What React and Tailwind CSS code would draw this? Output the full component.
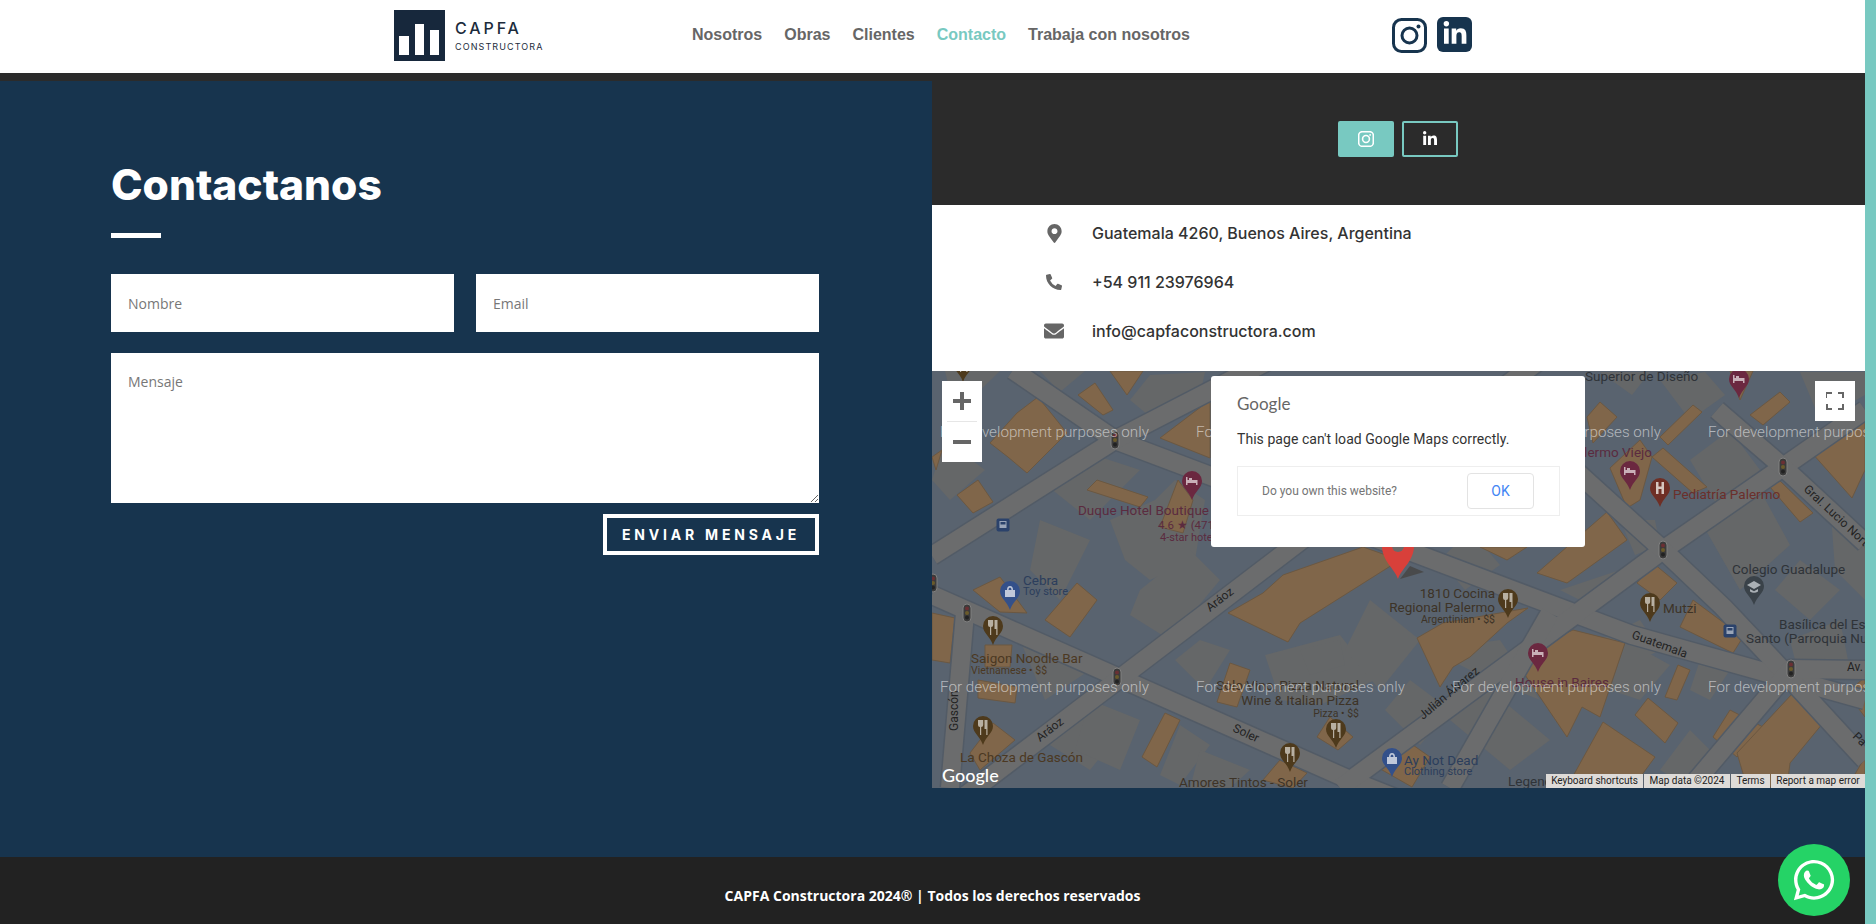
import React from 'react';
import { FaLinkedinIn, FaWhatsapp, FaMapMarkerAlt, FaPhoneAlt, FaEnvelope } from 'react-icons/fa';

const navItems = ['Nosotros', 'Obras', 'Clientes', 'Contacto', 'Trabaja con nosotros'];

const roads = [
  [[932, 595], [1350, 780], [1400, 800]],
  [[932, 821], [1052, 730], [1223, 600], [1400, 465], [1560, 345]],
  [[1013, 370], [1115, 440], [1632, 635], [1865, 700]],
  [[932, 556], [1115, 440], [1270, 360]],
  [[965, 613], [950, 788]],
  [[1340, 788], [1663, 550], [1783, 467], [1865, 410]],
  [[1500, 400], [1567, 463], [1663, 550], [1723, 607], [1773, 660], [1865, 760]],
  [[1717, 410], [1783, 467], [1865, 543]],
  [[1550, 613], [1450, 788]],
  [[1690, 788], [1791, 669], [1865, 670]],
];

const oranges = [
  '1110,371 1143,371 1127,395', '1078,395 1095,383 1113,410 1103,415',
  '1017,413 1038,397 1067,433 1027,473 1008,457 990,443', '957,495 978,480 993,502 973,513',
  '1087,490 1097,480 1148,497 1140,507', '1160,527 1178,480 1193,500 1183,533',
  '1160,438 1210,400 1210,458', '932,457 942,450 936,470',
  '1587,417 1600,402 1617,417 1593,443', '1660,437 1693,405 1702,412 1668,445',
  '1750,415 1780,392 1790,402 1763,425', '1812,453 1865,410 1865,470 1852,498',
  '1610,468 1640,440 1652,457 1640,500 1627,508', '1652,457 1663,448 1707,487 1693,493',
  '1770,487 1777,478 1813,513 1800,522', '1537,573 1607,512 1627,540 1567,583',
  '1480,547 1527,547 1507,560', '1637,583 1653,563 1677,583 1660,600',
  '1730,371 1753,371 1740,400', '973,590 1000,577 1027,613 1000,612',
  '1045,620 1077,583 1097,600 1070,637', '932,613 955,618 950,663 932,660',
  '985,645 1012,645 1010,667 985,667', '978,680 1017,687 1015,703 978,698',
  '970,753 993,723 1015,740 980,770', '1142,757 1165,713 1180,720 1157,767',
  '1228,613 1263,593 1283,575 1363,547 1400,560 1300,623 1288,642',
  '1217,702 1230,663 1250,670 1237,707', '1263,780 1280,760 1307,773 1293,788',
  '1317,737 1330,717 1353,737 1338,750', '1377,767 1410,743 1430,757 1412,787',
  '1417,638 1443,623 1528,608 1507,623 1470,657 1453,667 1440,687',
  '1557,637 1573,630 1625,643 1600,717 1582,707 1567,737 1517,663',
  '1567,787 1603,722 1655,757 1633,787', '1665,697 1678,665 1690,670 1677,700',
  '1635,715 1648,698 1678,723 1665,743', '1680,627 1693,600 1743,637 1733,653',
  '1713,737 1730,710 1763,727 1737,757', '1737,753 1793,693 1823,723 1790,763 1787,787 1747,787',
  '1847,693 1865,677 1865,717', '1847,788 1865,757 1865,788',
];

const grays = [
  '945,371 1000,371 970,400 950,392', '1040,371 1085,371 1060,392',
  '1130,400 1150,375 1205,372 1200,395 1160,425', '945,440 985,470 950,500 932,480',
  '1040,480 1085,452 1140,470 1090,520', '1110,520 1155,500 1175,480 1205,500 1195,560 1150,580 1125,560',
  '1040,520 1090,540 1060,600 1030,570', '1140,590 1190,550 1220,580 1170,640 1130,615',
  '1020,640 1060,650 1090,670 1045,700', '1050,745 1085,700 1130,720 1090,770',
  '1175,660 1200,640 1230,650 1205,690', '1180,725 1210,745 1180,785 1160,775',
  '1200,750 1250,770 1230,788 1190,788', '1265,655 1340,635 1375,680 1320,705 1280,700',
  '1370,600 1420,640 1380,690 1345,650', '1410,680 1450,710 1420,745 1385,710',
  '1450,720 1490,690 1550,740 1510,770', '1430,650 1500,640 1540,700 1490,680',
  '1600,372 1650,372 1632,395', '1660,380 1705,372 1725,395 1690,420', '1620,520 1655,520 1660,545 1635,555',
  '1690,460 1730,430 1760,470 1720,510', '1700,520 1760,490 1790,545 1740,590',
  '1800,560 1840,590 1810,620 1775,590', '1625,640 1670,665 1640,700 1610,690',
  '1500,500 1530,470 1570,510 1545,535', '1440,560 1470,530 1500,565 1465,590',
  '1800,372 1865,372 1865,395 1820,420', '1700,660 1730,670 1710,700 1690,690',
  '1560,590 1620,570 1600,610', '1790,640 1840,620 1850,670 1800,680',
  '1090,700 1140,720 1120,770 1075,750', '1300,650 1340,640 1345,665 1310,675',
  '1830,500 1865,530 1865,600 1835,570', '1600,640 1640,620 1660,650 1620,670',
  '1690,730 1720,760 1690,788 1660,770',
];

const labels = [
  { t: 'Superior de Diseño', x: 1585, y: 381, c: '#2f3338', s: 13.5 },
  { t: 'Palermo Viejo', x: 1652, y: 457, c: '#5b2b3f', s: 13.5, a: 'end' },
  { t: 'Pediatría Palermo', x: 1673, y: 499, c: '#6b2f2b', s: 13.5 },
  { t: 'Colegio Guadalupe', x: 1732, y: 574, c: '#2f3338', s: 13.5 },
  { t: 'Duque Hotel Boutique', x: 1078, y: 515, c: '#5b2b3f', s: 13.5 },
  { t: '4.6 ★ (471)', x: 1158, y: 529, c: '#5b2b3f', s: 11.5 },
  { t: '4-star hotel', x: 1160, y: 541, c: '#5b2b3f', s: 11 },
  { t: 'Cebra', x: 1023, y: 585, c: '#2c3e5c', s: 13.5 },
  { t: 'Toy store', x: 1023, y: 595, c: '#2c3e5c', s: 11 },
  { t: 'Saigon Noodle Bar', x: 971, y: 663, c: '#4b3822', s: 13.5 },
  { t: 'Vietnamese • $$', x: 971, y: 674, c: '#4b3822', s: 10.5 },
  { t: 'Solo Vino, Pizza Natural', x: 1359, y: 690, c: '#3d3327', s: 13.5, a: 'end' },
  { t: 'Wine & Italian Pizza', x: 1359, y: 705, c: '#3d3327', s: 13.5, a: 'end' },
  { t: 'Pizza • $$', x: 1359, y: 717, c: '#3d3327', s: 10.5, a: 'end' },
  { t: 'La Choza de Gascón', x: 960, y: 762, c: '#4b3822', s: 13.5 },
  { t: 'Amores Tintos - Soler', x: 1179, y: 787, c: '#3d3327', s: 13.5 },
  { t: 'Ay Not Dead', x: 1404, y: 765, c: '#2c3e5c', s: 13.5 },
  { t: 'Clothing store', x: 1404, y: 775, c: '#2c3e5c', s: 11 },
  { t: '1810 Cocina', x: 1495, y: 598, c: '#3d3327', s: 13.5, a: 'end' },
  { t: 'Regional Palermo', x: 1495, y: 612, c: '#3d3327', s: 13.5, a: 'end' },
  { t: 'Argentinian • $$', x: 1495, y: 623, c: '#3d3327', s: 10.5, a: 'end' },
  { t: 'Mutzi', x: 1663, y: 613, c: '#3d3327', s: 13.5 },
  { t: 'Basílica del Espíritu', x: 1779, y: 629, c: '#2f3338', s: 13.5 },
  { t: 'Santo (Parroquia Nuestra', x: 1746, y: 643, c: '#2f3338', s: 13.5 },
  { t: 'House in Baires', x: 1515, y: 687, c: '#5b2b3f', s: 13.5 },
  { t: 'Av.', x: 1847, y: 671, c: '#222', s: 12 },
  { t: 'Legend', x: 1508, y: 786, c: '#2f3338', s: 13.5 },
];

const streets = [
  { t: 'Aráoz', x: 1040, y: 742, r: -38 },
  { t: 'Aráoz', x: 1210, y: 612, r: -38 },
  { t: 'Gascón', x: 958, y: 731, r: -90 },
  { t: 'Soler', x: 1232, y: 731, r: 25 },
  { t: 'Guatemala', x: 1631, y: 638, r: 20 },
  { t: 'Julián Álvarez', x: 1423, y: 720, r: -40 },
  { t: 'Gral. Lucio Norte', x: 1803, y: 490, r: 43 },
  { t: 'Pa', x: 1852, y: 737, r: 45 },
];

const pins = [
  { x: 963, y: 382, c: '#4e3a1c', g: 'fork' }, { x: 993, y: 645, c: '#4e3a1c', g: 'fork' },
  { x: 983, y: 745, c: '#4e3a1c', g: 'fork' }, { x: 1290, y: 772, c: '#4e3a1c', g: 'fork' },
  { x: 1336, y: 748, c: '#4e3a1c', g: 'fork' }, { x: 1508, y: 618, c: '#4e3a1c', g: 'fork' },
  { x: 1650, y: 622, c: '#4e3a1c', g: 'fork' },
  { x: 1192, y: 500, c: '#6b2840', g: 'bed' }, { x: 1630, y: 490, c: '#6b2840', g: 'bed' },
  { x: 1739, y: 398, c: '#6b2840', g: 'bed' }, { x: 1538, y: 672, c: '#6b2840', g: 'bed' },
  { x: 1660, y: 507, c: '#6f2f25', g: 'h' },
  { x: 1754, y: 605, c: '#3a4249', g: 'school' },
  { x: 1010, y: 610, c: '#33508a', g: 'bag' }, { x: 1392, y: 777, c: '#33508a', g: 'bag' },
];

const lights = [[1115, 440], [967, 613], [1117, 677], [1783, 467], [1663, 550], [1791, 669], [933, 583]];
const buses = [[1003, 525], [1730, 631]];
const devMarks = [[940, 437], [1196, 437], [1452, 437], [1708, 437], [940, 692], [1196, 692], [1452, 692], [1708, 692]];

const PinGlyph = ({ g }) => {
  if (g === 'fork') return <path d="M-5 -25v5q0 2 2 2v8h1.2v-8q2 0 2-2v-5M1.5 -25h3v15h-1.2v-6h-1.8z" fill="#b8b0a2" />;
  if (g === 'bed') return <path d="M-6 -23h1.5v3h10v5h-1.5v-2h-8.5v2h-1.5zM-3 -22h3v2h-3z" fill="#c9b0b8" />;
  if (g === 'h') return <path d="M-4 -25h2.5v4.5h3v-4.5h2.5v12h-2.5v-5h-3v5h-2.5z" fill="#d6c6bf" />;
  if (g === 'school') return <path d="M0 -24l7 4-7 4-7-4zM-4 -16v2.5q4 2.5 8 0v-2.5l-4 2.2z" fill="#aab0b5" />;
  return <path d="M-5 -20h10v7h-10zM-3 -20q0-4 3-4t3 4h-1.5q0-2.5-1.5-2.5t-1.5 2.5z" fill="#c0c8da" />;
};

const MapDrawing = () => (
  <svg viewBox="932 371 933 417" className="block w-full h-full" fontFamily="Roboto, sans-serif">
    <rect x="932" y="371" width="933" height="417" fill="#59636f" />
    {grays.map((p) => <polygon key={p} points={p} fill="#656768" />)}
    {oranges.map((p) => <polygon key={p} points={p} fill="#80664a" stroke="#6b5842" strokeWidth="1" />)}
    {roads.map((r, i) => (
      <polyline key={i} points={r.map((p) => p.join(',')).join(' ')} fill="none" stroke="#525b66" strokeWidth="21" strokeLinejoin="round" />
    ))}
    {roads.map((r, i) => (
      <polyline key={i} points={r.map((p) => p.join(',')).join(' ')} fill="none" stroke="#6b6c6d" strokeWidth="18" strokeLinejoin="round" />
    ))}
    {lights.map(([x, y]) => (
      <g key={`${x}-${y}`}>
        <rect x={x - 4} y={y - 9} width="8" height="18" rx="4" fill="#3b3b3b" stroke="#808080" />
        <circle cx={x} cy={y - 4.5} r="2" fill="#6a2f33" />
        <circle cx={x} cy={y} r="2" fill="#6a5a2a" />
        <circle cx={x} cy={y + 4.5} r="2" fill="#222" />
      </g>
    ))}
    {buses.map(([x, y]) => (
      <g key={x}>
        <rect x={x - 6.5} y={y - 6.5} width="13" height="13" rx="2" fill="#2b426b" />
        <path d={`M${x - 3.5} ${y - 4}h7v7h-7zM${x - 2.5} ${y - 3}v2.5h5v-2.5z`} fill="#9aa5b8" fillRule="evenodd" />
      </g>
    ))}
    {labels.map((l) => (
      <text key={l.t} x={l.x} y={l.y} fill={l.c} fontSize={l.s} textAnchor={l.a || 'start'}>{l.t}</text>
    ))}
    {streets.map((s) => (
      <text key={`${s.t}-${s.x}`} transform={`translate(${s.x} ${s.y}) rotate(${s.r})`} fill="#232323" fontSize="12">{s.t}</text>
    ))}
    {pins.map((p) => (
      <g key={`${p.x}-${p.y}`} transform={`translate(${p.x} ${p.y})`}>
        <path d="M0 0C-3 -9 -10 -12 -10 -19a10 10 0 1 1 20 0C10 -12 3 -9 0 0Z" fill={p.c} />
        <PinGlyph g={p.g} />
      </g>
    ))}
    {/* red marker, most of it sits behind the dialog */}
    <path d="M1400 579l24-7-14-6z" fill="#3f3a33" fillOpacity="0.6" />
    <g transform="translate(1398 579)">
      <path d="M0 0C-3 -10 -16 -18 -16 -33a16 16 0 1 1 32 0C16 -18 3 -10 0 0Z" fill="#d8403a" />
      <circle cx="0" cy="-33" r="6" fill="#6a6a6a" />
    </g>
    {devMarks.map(([x, y]) => (
      <text key={`${x}-${y}`} x={x} y={y} fill="#ffffff" fillOpacity="0.55" fontSize="15.2" fontWeight="300">For development purposes only</text>
    ))}
  </svg>
);

const InstagramIcon = ({ size = 35, color = '#17344e', stroke = 3 }) => (
  <svg width={size} height={size} viewBox="0 0 35 35" fill="none" stroke={color} strokeWidth={stroke}>
    <rect x="1.5" y="1.5" width="32" height="32" rx="8" />
    <circle cx="17.5" cy="17.5" r="7.5" />
    <circle cx="26.5" cy="8.5" r="2" fill={color} stroke="none" />
  </svg>
);

const Logo = () => (
  <div className="flex items-center gap-[10px]">
    <svg width="51" height="51" viewBox="0 0 51 51">
      <rect width="51" height="51" fill="#17283c" />
      <rect x="5" y="26" width="10" height="19" fill="#fff" />
      <rect x="21" y="14" width="9" height="31" fill="#fff" />
      <rect x="36" y="20" width="9" height="25" fill="#fff" />
    </svg>
    <div className="text-[#1c2b3c] font-['Inter',sans-serif]">
      <div className="text-[16px] leading-[20px] font-medium tracking-[2.9px]">CAPFA</div>
      <div className="text-[9px] leading-[10px] mt-[4px] tracking-[1.1px]">CONSTRUCTORA</div>
    </div>
  </div>
);

const Header = () => (
  <header className="h-[73px] bg-white flex items-center pl-[394px] pb-[3px]">
    <div className="w-[298px]"><Logo /></div>
    <nav className="flex gap-[22px] w-[700px] font-['Liberation_Sans',sans-serif] font-bold text-[16px]">
      {navItems.map((item) => (
        <a key={item} className={item === 'Contacto' ? 'text-[#78c9c1]' : 'text-[#666]'}>{item}</a>
      ))}
    </nav>
    <div className="flex items-center gap-[10px]">
      <InstagramIcon />
      <div className="w-[35px] h-[35px] rounded-[6px] bg-[#17344e] flex items-center justify-center text-white -mt-[2px]">
        <FaLinkedinIn size={26} />
      </div>
    </div>
  </header>
);

const ContactForm = () => (
  <section className="w-[932px] mt-[8px] bg-[#17344e] pl-[111px] pr-[113px] pt-[76px]">
    <h1 className="text-white font-['Inter',sans-serif] font-extrabold text-[42.5px] leading-[56px]">Contactanos</h1>
    <div className="w-[50px] h-[5px] bg-white mt-[20px]" />
    <div className="flex gap-[22px] mt-[36px]">
      <input placeholder="Nombre" className="flex-1 min-w-0 h-[58px] bg-white px-[17px] text-[14px] font-['Open_Sans',sans-serif] placeholder:text-[#777] outline-none" />
      <input placeholder="Email" className="flex-1 min-w-0 h-[58px] bg-white px-[17px] text-[14px] font-['Open_Sans',sans-serif] placeholder:text-[#777] outline-none" />
    </div>
    <textarea placeholder="Mensaje" className="block w-full h-[150px] mt-[21px] bg-white px-[17px] py-[19px] text-[14px] leading-[20px] font-['Open_Sans',sans-serif] placeholder:text-[#777] outline-none" />
    <div className="flex justify-end mt-[11px]">
      <button className="w-[216px] h-[41px] border-[4px] border-white text-white font-['Inter',sans-serif] font-bold text-[14px] tracking-[3.8px]">ENVIAR MENSAJE</button>
    </div>
  </section>
);

const contactRows = [
  { icon: <FaMapMarkerAlt size={19} />, text: 'Guatemala 4260, Buenos Aires, Argentina' },
  { icon: <FaPhoneAlt size={16} />, text: '+54 911 23976964' },
  { icon: <FaEnvelope size={20} />, text: 'info@capfaconstructora.com' },
];

const MapPanel = () => (
  <div className="relative h-[417px] overflow-hidden">
    <MapDrawing />
    <div className="absolute left-[10px] top-[10px] w-[40px] h-[81px] bg-white flex flex-col items-center text-[#666]">
      <svg width="40" height="40" viewBox="0 0 40 40"><path d="M18 11h4v7h7v4h-7v7h-4v-7h-7v-4h7z" fill="currentColor" /></svg>
      <div className="w-[30px] h-px bg-[#e6e6e6]" />
      <svg width="40" height="40" viewBox="0 0 40 40"><path d="M11 18h18v4h-18z" fill="currentColor" /></svg>
    </div>
    <div className="absolute right-[10px] top-[10px] w-[40px] h-[40px] bg-white flex items-center justify-center">
      <svg width="18" height="18" viewBox="0 0 18 18" fill="none" stroke="#666" strokeWidth="2"><path d="M0 6V1h6M12 1h5v5M17 12v5h-5M6 17H1v-5" /></svg>
    </div>
    <div className="absolute left-[279px] top-[5px] w-[374px] h-[171px] bg-white rounded-[3px] px-[26px] pt-[16px] font-['Roboto',sans-serif]">
      <div className="font-['Lato',sans-serif] text-[17px] leading-[24px] text-[#666]">Google</div>
      <p className="mt-[11px] text-[14px] leading-[24px] tracking-[0.05px] text-[#333]">This page can't load Google Maps correctly.</p>
      <div className="mt-[15px] w-[323px] h-[50px] border border-[#eee] flex items-center justify-between pl-[24px] pr-[25px]">
        <span className="text-[12px] text-[#757575]">Do you own this website?</span>
        <button className="w-[67px] h-[36px] border border-[#e3e3e3] rounded-[4px] text-[14px] text-[#4285f4]">OK</button>
      </div>
    </div>
    <div className="absolute left-[10px] bottom-[1px] text-white font-['Lato',sans-serif] text-[18px] leading-[24px] font-medium">Google</div>
    <div className="absolute right-0 bottom-0 h-[14px] flex gap-px text-[10px] leading-[14px] text-[#222] font-['Roboto',sans-serif]">
      <span className="w-[97px] text-center bg-[#dedbd8]">Keyboard shortcuts</span>
      <span className="w-[86px] text-center bg-[#dedbd8]">Map data ©2024</span>
      <span className="w-[39px] text-center bg-[#dedbd8]">Terms</span>
      <span className="w-[94px] text-center bg-[#dedbd8]">Report a map error</span>
    </div>
  </div>
);

const InfoColumn = () => (
  <section className="flex-1 flex flex-col">
    <div className="h-[132px] flex justify-center gap-[8px] pt-[48px] pr-[2px]">
      <div className="w-[56px] h-[36px] rounded-[2px] bg-[#78c9c1] flex items-center justify-center">
        <InstagramIcon size={16} color="#fff" stroke={3.5} />
      </div>
      <div className="w-[56px] h-[36px] rounded-[2px] border-2 border-[#78c9c1] flex items-center justify-center text-white">
        <FaLinkedinIn size={16} />
      </div>
    </div>
    <div className="h-[166px] bg-white pl-[110px] pt-[16px] flex flex-col gap-[25px]">
      {contactRows.map((row) => (
        <div key={row.text} className="flex items-center h-[24px]">
          <span className="w-[24px] flex justify-center text-[#666]">{row.icon}</span>
          <span className="ml-[26px] font-['Inter',sans-serif] font-medium text-[16px] text-[#333]">{row.text}</span>
        </div>
      ))}
    </div>
    <MapPanel />
    <div className="flex-1 bg-[#17344e]" />
  </section>
);

export default function App() {
  return (
    <div className="relative flex h-[924px] overflow-hidden bg-[#2b2b2b]">
      <div className="flex-1 flex flex-col min-w-0">
        <Header />
        <main className="flex flex-1 min-h-0">
          <ContactForm />
          <InfoColumn />
        </main>
        <footer className="h-[67px] bg-[#222] pt-[9px] flex items-center justify-center text-white text-[14px] font-bold font-['Open_Sans',sans-serif]">
          CAPFA Constructora 2024® | Todos los derechos reservados
        </footer>
      </div>
      <div className="w-[11px] bg-[#78c9c1]" />
      <a className="absolute right-[26px] bottom-[8px] w-[72px] h-[72px] rounded-full bg-[#25d366] flex items-center justify-center text-white">
        <FaWhatsapp size={46} />
      </a>
    </div>
  );
}
